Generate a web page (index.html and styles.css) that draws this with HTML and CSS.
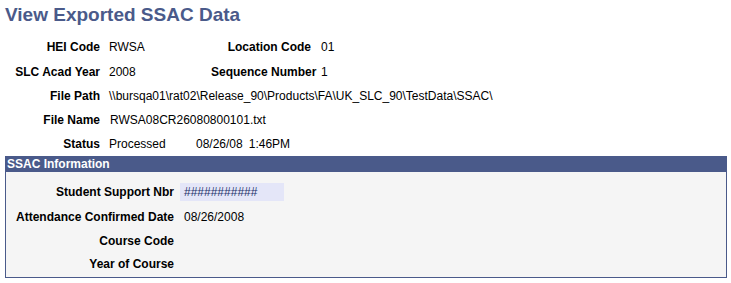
FILE: index.html
```html
<!DOCTYPE html>
<html>
<head>
<meta charset="utf-8">
<link rel="stylesheet" href="styles.css">
</head>
<body>
<h1 class="title">View Exported SSAC Data</h1>
<div class="top">
  <div class="lbl">HEI Code</div><div class="val">RWSA</div>
  <div class="lbl">Location Code</div><div class="val">01</div>
  <div class="lbl">SLC Acad Year</div><div class="val">2008</div>
  <div class="lbl">Sequence Number</div><div class="val">1</div>
  <div class="lbl">File Path</div><div class="val wide">\\bursqa01\rat02\Release_90\Products\FA\UK_SLC_90\TestData\SSAC\</div>
  <div class="lbl">File Name</div><div class="val wide">RWSA08CR26080800101.txt</div>
  <div class="lbl">Status</div><div class="val wide"><span class="status">Processed</span><span class="dt">08/26/08</span><span class="tm">1:46PM</span></div>
</div>
<section class="box">
  <div class="box-head">SSAC Information</div>
  <div class="box-body">
    <div class="lbl">Student Support Nbr</div><div class="val"><span class="field">###########</span></div>
    <div class="lbl">Attendance Confirmed Date</div><div class="val">08/26/2008</div>
    <div class="lbl">Course Code</div><div class="val"></div>
    <div class="lbl">Year of Course</div><div class="val"></div>
  </div>
</section>
</body>
</html>
```
FILE: styles.css
```css
html, body {
  margin: 0;
  padding: 0;
  background: #ffffff;
}
body {
  font-family: Arial, "Liberation Sans", sans-serif;
  font-size: 12px;
  color: #000000;
  width: 731px;
  height: 283px;
  overflow: hidden;
}
.title {
  margin: 0;
  padding: 4px 0 0 5px;
  height: 30px;
  box-sizing: border-box;
  font-size: 19px;
  font-weight: bold;
  color: #4a5a8a;
  line-height: 22px;
}
.top {
  display: grid;
  grid-template-columns: 100px 111px 100px 1fr;
  grid-template-rows: 25px 25px 24px 24px 23px;
  column-gap: 0;
  padding-top: 4px;
  height: 125px;
  box-sizing: border-box;
}
.lbl {
  font-weight: bold;
  text-align: right;
  white-space: nowrap;
  align-self: center;
}
.val {
  padding-left: 9px;
  white-space: nowrap;
  align-self: center;
}
.top .val:nth-child(4n+2) { padding-left: 9px; }
.top .val:nth-child(4n) { padding-left: 10px; }
.wide {
  grid-column: 2 / 5;
}
.status {
  display: inline-block;
  width: 87px;
}
.tm {
  margin-left: 6px;
}
.box {
  margin: 1px 4px 0 5px;
  border: 1px solid #4a5a8a;
  border-top: none;
  background: #f5f5f5;
  height: 122px;
  box-sizing: border-box;
}
.box-head {
  background: #4a5a8a;
  color: #ffffff;
  font-weight: bold;
  height: 16px;
  line-height: 16px;
  padding-left: 1px;
}
.box-body {
  display: grid;
  grid-template-columns: 168px 1fr;
  grid-template-rows: 24px 25px 23px 23px;
  padding-top: 8px;
}
.box-body .val {
  padding-left: 10px;
}
.field {
  display: inline-block;
  background: #e4e6f8;
  width: 104px;
  height: 18px;
  line-height: 18px;
  padding-left: 4px;
  box-sizing: border-box;
  margin-left: -4px;
  color: #22306a;
}
```
